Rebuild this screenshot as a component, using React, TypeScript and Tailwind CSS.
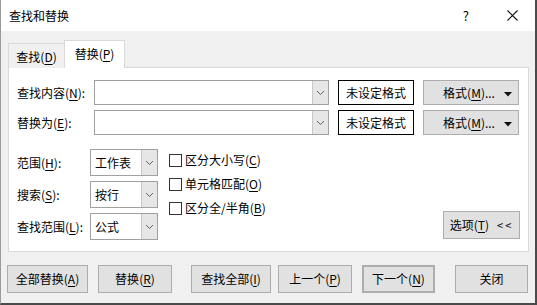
import React from "react";

const font = "font-['Noto_Sans_CJK_SC','Noto_Sans',sans-serif]";

const Key = ({ k }: { k: string }) => (
  <>
    (<u className="underline-offset-2">{k}</u>)
  </>
);

const Chevron = () => (
  <svg width="9" height="6" viewBox="0 0 9 6" className="text-[#606060]">
    <polyline points="1,1 4.5,4.5 8,1" fill="none" stroke="currentColor" strokeWidth="1" />
  </svg>
);

const Combo = ({ width, value }: { width: string; value?: string }) => (
  <div className={`flex h-full ${width} border border-[#a0a0a0] bg-white`}>
    <div className="flex flex-1 items-center pl-[4px] text-[12px]">{value}</div>
    <div className="flex w-[16px] items-center justify-center border-l border-[#c8c8c8] bg-[#e6e6e6]">
      <Chevron />
    </div>
  </div>
);

const FormatButton = () => (
  <div className="relative flex h-full w-[96px] items-center justify-center border border-[#adadad] bg-[#e1e1e1] text-[12px]">
    <span className="-ml-[4px]">
      格式<Key k="M" />...
    </span>
    <svg width="8" height="5" viewBox="0 0 8 5" className="absolute right-[6px] top-[11px]">
      <polygon points="0,0 8,0 4,4.5" fill="#111" />
    </svg>
  </div>
);

const Check = ({ children }: { children: React.ReactNode }) => (
  <div className="flex h-[24px] items-center gap-[3px] text-[12px]">
    <div className="h-[13px] w-[13px] border border-[#333] bg-white" />
    <span>{children}</span>
  </div>
);

const Button = ({
  children,
  className,
}: {
  children: React.ReactNode;
  className: string;
}) => (
  <div
    className={`flex h-[28px] items-center justify-center border border-[#adadad] bg-[#e1e1e1] text-[12px] ${className}`}
  >
    {children}
  </div>
);

export default function App() {
  return (
    <div
      className={`${font} relative h-[305px] w-[537px] overflow-hidden border-r-2 border-b-2 border-l border-[#4a4a4a] border-l-[#9a9a9a] bg-[#f0f0f0] text-[#000]`}
    >
      {/* title bar */}
      <div className="flex h-[31px] items-center bg-white pl-[8px] text-[12px]">
        <span>查找和替换</span>
        <span className="ml-auto mr-[38px] text-[13px]">?</span>
        <svg width="11" height="11" viewBox="0 0 11 11" className="mr-[17px]">
          <path d="M0.5 0.5 L10.5 10.5 M10.5 0.5 L0.5 10.5" stroke="#111" strokeWidth="1.1" />
        </svg>
      </div>

      {/* tabs */}
      <div className="flex h-[36px] items-end pl-[7px] pt-[9px] text-[12px]">
        <div className="z-0 -mb-px flex h-[25px] w-[57px] items-center justify-center border border-b-0 border-[#d9d9d9] bg-[#f0f0f0] pt-[1px]">
          查找<Key k="D" />
        </div>
        <div className="z-10 -mb-px -ml-px flex h-[28px] w-[61px] items-center justify-center border border-b-0 border-[#d9d9d9] bg-white pb-[2px]">
          替换<Key k="P" />
        </div>
      </div>

      {/* panel */}
      <div className="ml-[7px] h-[185px] w-[521px] border border-[#d9d9d9] bg-white px-[8px] pb-[10px] pt-[12px] text-[12px]">
        <div className="flex h-[25px] items-center">
          <div className="w-[77px]">
            查找内容<Key k="N" />:
          </div>
          <Combo width="w-[235px]" />
          <div className="ml-[9px] flex h-full w-[76px] items-center justify-center border border-black">
            未设定格式
          </div>
          <div className="ml-[9px] h-full">
            <FormatButton />
          </div>
        </div>
        <div className="mt-[5px] flex h-[25px] items-center">
          <div className="w-[77px]">
            替换为<Key k="E" />:
          </div>
          <Combo width="w-[235px]" />
          <div className="ml-[9px] flex h-full w-[76px] items-center justify-center border border-black">
            未设定格式
          </div>
          <div className="ml-[9px] h-full">
            <FormatButton />
          </div>
        </div>

        <div className="mt-[14px] flex h-[92px]">
          <div className="grid grid-cols-[73px_68px] grid-rows-[27px_27px_27px] gap-y-[5px]">
            <div className="flex items-center">
              范围<Key k="H" />:
            </div>
            <Combo width="w-[68px]" value="工作表" />
            <div className="flex items-center">
              搜索<Key k="S" />:
            </div>
            <Combo width="w-[68px]" value="按行" />
            <div className="flex items-center">
              查找范围<Key k="L" />:
            </div>
            <Combo width="w-[68px]" value="公式" />
          </div>
          <div className="ml-[11px] -mt-[1px] flex flex-col">
            <Check>
              区分大小写<Key k="C" />
            </Check>
            <Check>
              单元格匹配<Key k="O" />
            </Check>
            <Check>
              区分全/半角<Key k="B" />
            </Check>
          </div>
          <div className="ml-auto flex items-end pb-[2px]">
            <Button className="w-[77px]">
              <span>
                选项(<u className="underline-offset-2">T</u>)
              </span>
              <span className="ml-[8px] text-[11px] tracking-[2px]">&lt;&lt;</span>
            </Button>
          </div>
        </div>
      </div>

      {/* bottom buttons */}
      <div className="mt-[13px] flex pl-[6px]">
        <Button className="w-[81px]">
          全部替换<Key k="A" />
        </Button>
        <Button className="ml-[10px] w-[74px]">
          替换<Key k="R" />
        </Button>
        <Button className="ml-[19px] w-[80px]">
          查找全部<Key k="I" />
        </Button>
        <Button className="ml-[7px] w-[74px]">
          上一个<Key k="P" />
        </Button>
        <Button className="ml-[10px] w-[73px] border-2 border-[#0078d7]">
          下一个<Key k="N" />
        </Button>
        <Button className="ml-[20px] w-[73px]">关闭</Button>
      </div>
    </div>
  );
}
